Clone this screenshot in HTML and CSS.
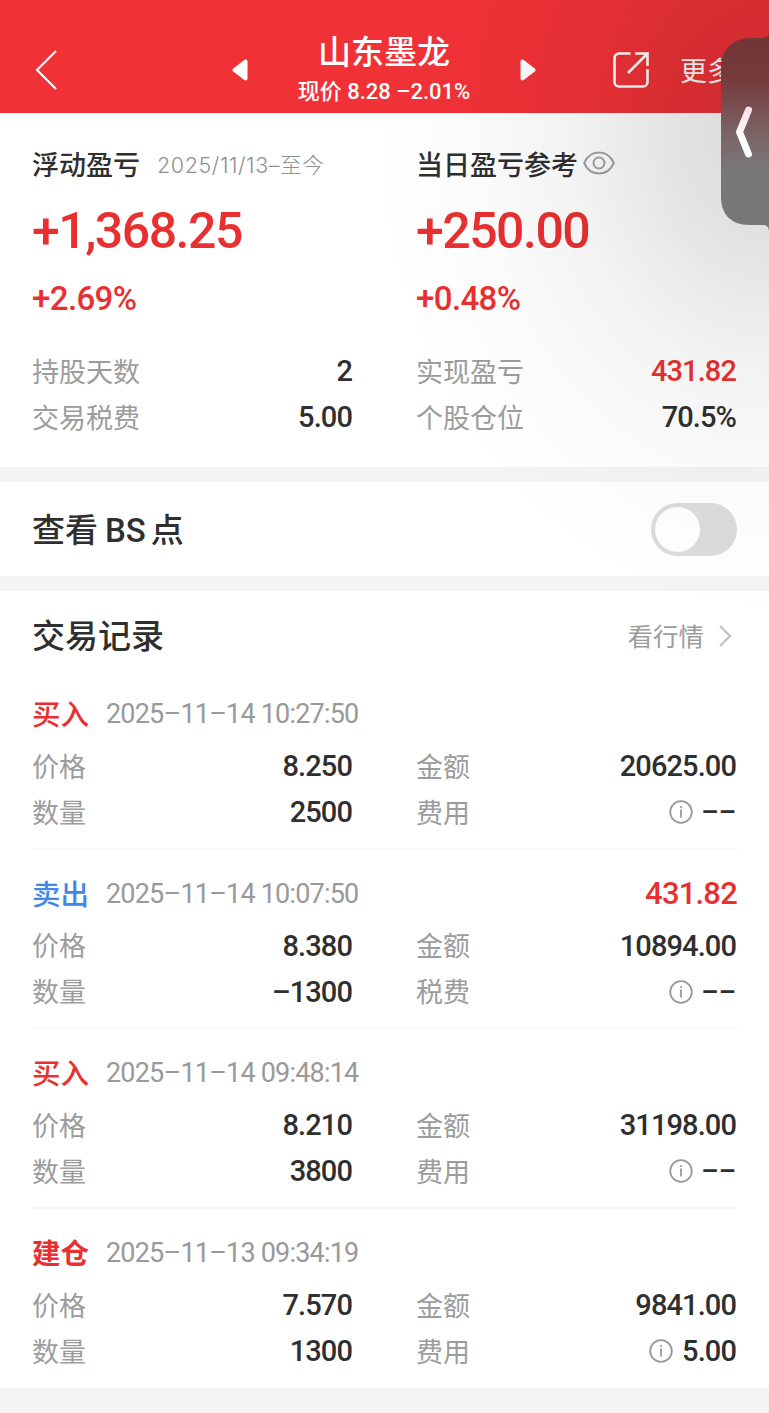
FILE: index.html
```html
<!DOCTYPE html>
<html lang="zh-CN">
<head>
  <meta charset="UTF-8" />
  <title>山东墨龙</title>
  <link rel="stylesheet" href="styles.css">
</head>
<body>

<!-- Shared icon -->
<svg class="defs" width="0" height="0">
  <symbol id="info" viewBox="0 0 24 24">
    <circle cx="12" cy="12" r="10.8" />
    <path d="M12 9.500v8M12 6.300v1.700" />
  </symbol>
</svg>

<div class="page">
  <header class="header">
    <svg class="back" viewBox="0 0 24 40"><path d="M22 1 3 20l19 19" /></svg>
    <svg class="switch prev" viewBox="0 0 16 22"><path d="M13.5 2.5v17L2.5 11z" /></svg>
    <div class="stock">
      <h1>山东墨龙</h1>
      <div class="quote">现价 8.28 –2.01%</div>
    </div>
    <svg class="switch next" viewBox="0 0 16 22"><path d="M2.5 2.5v17l11-8.5z" /></svg>
    <svg class="share" viewBox="0 0 36 36"><path d="M17.5 1.5H6A4.5 4.5 0 0 0 1.5 6v24A4.5 4.5 0 0 0 6 34.5h24a4.5 4.5 0 0 0 4.5-4.5V17M22 1.5h12.5V14M34 2 15 21" /></svg>
    <span class="more">更多</span>
  </header>

  <section class="summary">
    <div class="col">
      <div class="label"><span>浮动盈亏</span><span class="since">2025/11/13–至今</span></div>
      <div class="big">+1,368.25</div>
      <div class="pct">+2.69%</div>
      <div class="row"><span>持股天数</span><b>2</b></div>
      <div class="row"><span>交易税费</span><b>5.00</b></div>
    </div>
    <div class="col">
      <div class="label">
        <span>当日盈亏参考</span>
        <svg class="eye" viewBox="0 0 32 24"><path d="M1.200 12C4 5.500 9.500 1.500 16 1.500S28 5.500 30.800 12C28 18.500 22.500 22.500 16 22.500S4 18.500 1.200 12z" /><circle cx="16" cy="12" r="5.500" /></svg>
      </div>
      <div class="big">+250.00</div>
      <div class="pct">+0.48%</div>
      <div class="row"><span>实现盈亏</span><b class="red">431.82</b></div>
      <div class="row"><span>个股仓位</span><b>70.5%</b></div>
    </div>
  </section>

  <section class="bs">
    <h2>查看<span class="latin">BS</span>点</h2>
    <div class="toggle"></div>
  </section>

  <section class="records">
    <div class="records-head">
      <h2>交易记录</h2>
      <div class="link"><span>看行情</span><svg viewBox="0 0 14 24"><path d="M2 2l10 10L2 22" /></svg></div>
    </div>

    <div class="record">
      <div class="record-head"><span class="side buy">买入</span><span class="time">2025–11–14 10:27:50</span></div>
      <div class="grid">
        <div class="row"><span>价格</span><b>8.250</b></div>
        <div class="row"><span>金额</span><b>20625.00</b></div>
        <div class="row"><span>数量</span><b>2500</b></div>
        <div class="row"><span>费用</span><svg class="info"><use href="#info" /></svg><b class="empty">––</b></div>
      </div>
    </div>

    <div class="record">
      <div class="record-head"><span class="side sell">卖出</span><span class="time">2025–11–14 10:07:50</span><b class="profit">431.82</b></div>
      <div class="grid">
        <div class="row"><span>价格</span><b>8.380</b></div>
        <div class="row"><span>金额</span><b>10894.00</b></div>
        <div class="row"><span>数量</span><b>–1300</b></div>
        <div class="row"><span>税费</span><svg class="info"><use href="#info" /></svg><b class="empty">––</b></div>
      </div>
    </div>

    <div class="record">
      <div class="record-head"><span class="side buy">买入</span><span class="time">2025–11–14 09:48:14</span></div>
      <div class="grid">
        <div class="row"><span>价格</span><b>8.210</b></div>
        <div class="row"><span>金额</span><b>31198.00</b></div>
        <div class="row"><span>数量</span><b>3800</b></div>
        <div class="row"><span>费用</span><svg class="info"><use href="#info" /></svg><b class="empty">––</b></div>
      </div>
    </div>

    <div class="record">
      <div class="record-head"><span class="side buy open">建仓</span><span class="time">2025–11–13 09:34:19</span></div>
      <div class="grid">
        <div class="row"><span>价格</span><b>7.570</b></div>
        <div class="row"><span>金额</span><b>9841.00</b></div>
        <div class="row"><span>数量</span><b>1300</b></div>
        <div class="row"><span>费用</span><svg class="info"><use href="#info" /></svg><b>5.00</b></div>
      </div>
    </div>
  </section>

  <!-- Floating side tab and its shadow -->
  <div class="shade"></div>
  <svg class="tab" viewBox="0 0 48 198">
    <defs>
      <linearGradient id="tabFill" x1="0" y1="0" x2="0" y2="1">
        <stop offset="0" stop-color="#733435" />
        <stop offset="0.25" stop-color="#763c3d" />
        <stop offset="0.5" stop-color="#7a6263" />
        <stop offset="0.68" stop-color="#797677" />
        <stop offset="1" stop-color="#777" />
      </linearGradient>
      <linearGradient id="arrowFill" x1="0" y1="0" x2="0" y2="1">
        <stop offset="0" stop-color="#ffdfe6" />
        <stop offset="0.65" stop-color="#fff" />
      </linearGradient>
    </defs>
    <path fill="url(#tabFill)" d="M48 0C47 4 45 5 40 5H28C10 6 0 18 0 34V164C0 181 10 192 28 192H41C45 192 47 193 48 197z" />
    <path class="arrow" d="M27.500 77 18.500 99l9 22" />
  </svg>
</div>

</body>
</html>
```

FILE: styles.css
```css
* {
  box-sizing: border-box;
}

body {
  margin: 0;
  background: #f4f4f4;
  color: #2f2f2f;
  font-family: Roboto, "Noto Sans CJK SC", sans-serif;
}

h1, h2 {
  margin: 0;
  font-weight: 500;
}

svg {
  display: block;
  flex: none;
  fill: none;
}

.defs {
  position: absolute;
}

.page {
  position: relative;
  height: 1413px;
  overflow: hidden;
}

/* Header */
.header {
  display: flex;
  align-items: center;
  height: 113px;
  padding: 27px 0 0 34px;
  background: #f03237;
  color: #fff;
  white-space: nowrap;
}

.back {
  width: 24px;
  height: 40px;
  stroke: #fff;
  stroke-width: 2.2;
}

.switch {
  width: 16px;
  height: 22px;
  fill: #fff;
  stroke: #fff;
  stroke-width: 4;
  stroke-linejoin: round;
}

.prev {
  margin-left: 174px;
}

.stock {
  width: 272px;
  padding-top: 2px;
  text-align: center;
}

.stock h1 {
  font-size: 33px;
  line-height: 42px;
}

.quote {
  font-size: 22px;
  line-height: 36px;
  font-weight: 500;
}

.share {
  width: 36px;
  height: 36px;
  margin-left: 77px;
  stroke: #fff;
  stroke-width: 2.6;
}

.more {
  margin-left: 31px;
  padding-bottom: 2px;
  font-size: 27px;
}

/* Summary */
.summary {
  display: grid;
  grid-template-columns: 320px 320px;
  column-gap: 64px;
  height: 354px;
  padding: 27px 32px 0;
  background: #fff;
}

.label {
  display: flex;
  align-items: center;
  height: 46px;
  font-size: 27px;
  font-weight: 500;
  white-space: nowrap;
}

.since {
  margin-left: 17px;
  font-family: Inter, "Noto Sans CJK SC", sans-serif;
  font-size: 21.5px;
  font-weight: 300;
  letter-spacing: 0.6px;
  color: #8f8f8f;
}

.eye {
  width: 32px;
  height: 24px;
  margin-left: 5px;
  stroke: #a2a2a2;
  stroke-width: 2;
}

.big {
  margin-top: 15px;
  font-size: 50px;
  line-height: 61px;
  font-weight: 500;
  letter-spacing: -1.5px;
  color: #e93030;
}

.pct {
  margin: 17px 0 29px;
  font-size: 33px;
  line-height: 40px;
  font-weight: 500;
  letter-spacing: -0.6px;
  color: #e93030;
}

.row {
  display: flex;
  align-items: center;
  height: 46px;
  font-size: 27px;
  color: #9c9c9c;
}

.row span {
  padding-bottom: 2px;
}

.row b {
  margin-left: auto;
  font-size: 29px;
  font-weight: 500;
  letter-spacing: -0.9px;
  color: #2f2f2f;
}

.row b.red {
  color: #e93030;
}

/* BS switch */
.bs {
  display: flex;
  align-items: center;
  justify-content: space-between;
  height: 94px;
  margin: 15px 0;
  padding: 0 32px;
  background: #fff;
}

.bs h2 {
  padding-top: 4px;
}

h2 {
  font-size: 33px;
  line-height: 46px;
}

.latin {
  margin: 0 5px 0 7px;
}

.toggle {
  width: 86px;
  height: 53px;
  padding: 4px;
  border-radius: 27px;
  background: #dcdcdc;
}

.toggle::before {
  content: "";
  display: block;
  width: 45px;
  height: 45px;
  border-radius: 50%;
  background: #fff;
}

/* Trade records */
.records {
  height: 797px;
  padding: 0 32px;
  background: #fff;
}

.records-head {
  display: flex;
  align-items: center;
  justify-content: space-between;
  height: 79px;
  padding-top: 11px;
}

.records-head h2 {
  padding-top: 2px;
}

.link {
  display: flex;
  align-items: center;
  font-size: 25.5px;
  color: #9c9c9c;
}

.link span {
  padding-bottom: 4px;
}

.link svg {
  width: 14px;
  height: 24px;
  margin: 0 5px 0 14px;
  stroke: #c4c4c4;
  stroke-width: 2.4;
}

.record {
  height: 179.7px;
  padding-top: 21px;
  border-bottom: 2px solid #f8f8f8;
}

.record:last-child {
  border-bottom: 0;
}

.record-head {
  display: flex;
  align-items: center;
  height: 46px;
  margin-bottom: 6px;
}

.side {
  width: 74px;
  padding-bottom: 3px;
  font-size: 28.5px;
  font-weight: 500;
}

.buy {
  color: #e93030;
}

.sell {
  color: #3f87e8;
}

.open {
  font-weight: 700;
}

.time {
  font-size: 27px;
  letter-spacing: -0.8px;
  color: #999;
}

.profit {
  margin-left: auto;
  font-size: 31px;
  font-weight: 500;
  letter-spacing: -0.8px;
  color: #e93030;
}

.grid {
  display: grid;
  grid-template-columns: 320px 320px;
  column-gap: 64px;
}

.info {
  width: 24px;
  height: 24px;
  margin-left: auto;
  stroke: #999;
  stroke-width: 1.8;
}

.row .info + b {
  margin-left: 9px;
}

.row .info + b.empty {
  margin-left: 8px;
  font-size: 27px;
  letter-spacing: 0;
}

/* Side tab */
.shade {
  position: absolute;
  top: 0;
  right: 0;
  width: 420px;
  height: 640px;
  background: radial-gradient(ellipse 400px 490px at 100% 130px, rgba(0, 0, 0, 0.15), rgba(0, 0, 0, 0.11) 24%, rgba(0, 0, 0, 0.05) 48%, rgba(0, 0, 0, 0.015) 74%, rgba(0, 0, 0, 0));
}

.tab {
  position: absolute;
  top: 33px;
  right: 0;
  width: 48px;
  height: 198px;
}

.arrow {
  stroke: url(#arrowFill);
  stroke-width: 7;
  stroke-linecap: round;
  stroke-linejoin: round;
}
```
